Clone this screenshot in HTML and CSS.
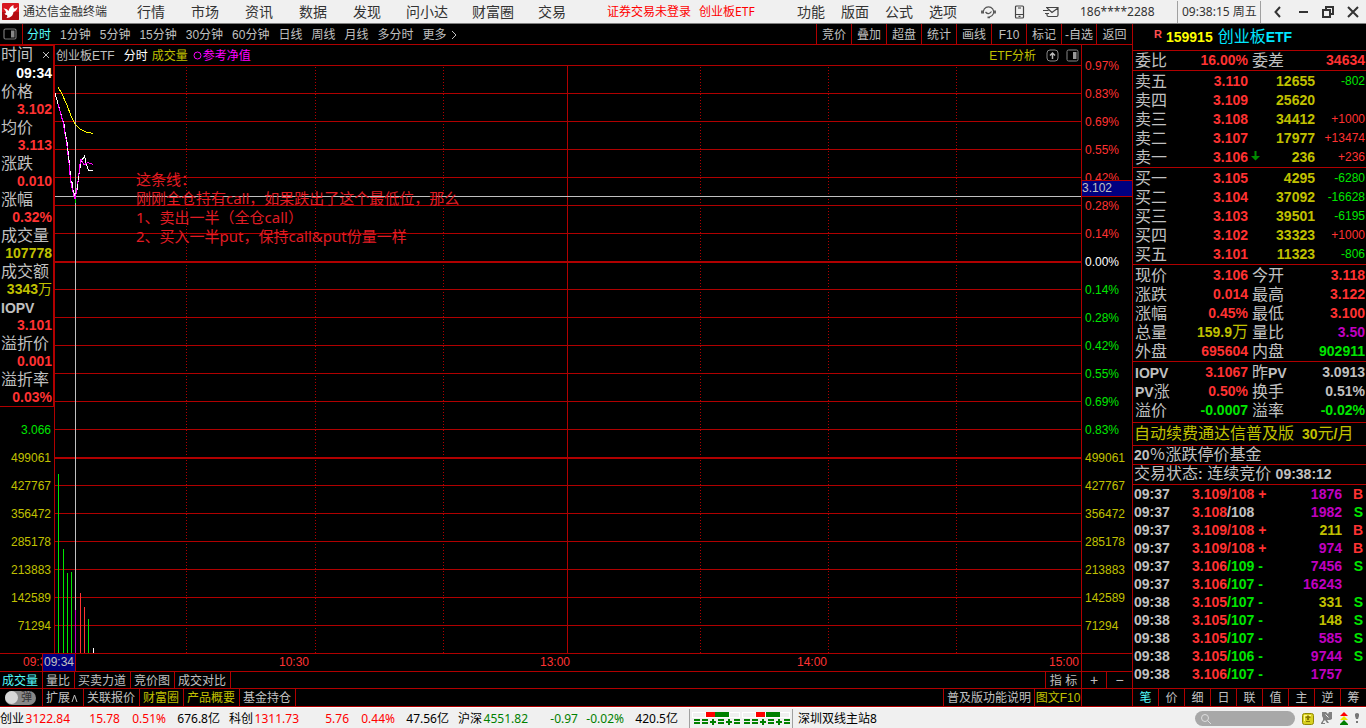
FILE: index.html
```html
<!DOCTYPE html>
<html lang="zh-CN">
<head>
<meta charset="utf-8">
<title>通达信金融终端</title>
<link rel="stylesheet" href="styles.css">
</head>
<body>
<header class="titlebar">
  <svg class="logo" viewBox="0 0 17 17"><rect width="17" height="17" rx="1" fill="#d8161e"/><path d="M0 9h17v7a1 1 0 0 1-1 1H1a1 1 0 0 1-1-1z" fill="#b40c12"/><path d="M1.500 5.500Q5 5 6.500 8q1-4.500 5-6-.5 2.500.5 3.500 1.500.5 3.500-1.500-.5 4-4 5-.5 4-4 5.500l-3 .5q1.500-1.500.5-3-2 0-2.500-1.500 1.500 0 1.500-1.500Q3.500 7 1.500 5.500z" fill="#fff"/></svg>
  <span class="brand">通达信金融终端</span>
  <nav class="menu menu-main"><button>行情</button><button>市场</button><button>资讯</button><button>数据</button><button>发现</button></nav>
  <nav class="menu menu-more"><button>问小达</button><button>财富圈</button><button>交易</button></nav>
  <div class="login"><a href="#">证券交易未登录</a><a href="#">创业板ETF</a></div>
  <div class="title-right">
    <nav class="menu menu-tools"><button>功能</button><button>版面</button><button>公式</button><button>选项</button></nav>
    <div class="title-icons">
      <button aria-label="客服"><svg width="15" height="14" viewBox="0 0 15 14" fill="none" stroke="#555" stroke-width="1.2"><path d="M2.500 8.500A5.200 5.200 0 1 1 12.500 8.500Q11.500 11 8.500 12M4.500 7q3 3.500 6-.5"/><path d="M1 5.500v3M14 5.500v3M6.500 12.300h2.500" stroke-width="1.800"/></svg></button>
      <button aria-label="手机"><svg width="11" height="14" viewBox="0 0 11 14" fill="none" stroke="#444" stroke-width="1.200"><rect x="1.500" y="1" width="8" height="12" rx="1"/><path d="M2 9.500h7M4.500 11.300h2M4 3h3"/></svg></button>
      <button aria-label="邮件"><svg width="16" height="12" viewBox="0 0 16 12" fill="none" stroke="#444" stroke-width="1.200"><path d="M3 1.500h12v7.500q0 1.500-1.500 1.500H5.500Q4 10.500 4 9V7.500M4 2l5 4.500L15 2M0 4.500h5.500M2 7.500h4"/></svg></button>
    </div>
    <span class="account">186****2288</span>
    <time class="clock">09:38:15 周五</time>
    <div class="window-buttons">
      <button aria-label="后退"><svg width="12" height="12" viewBox="0 0 12 12"><path d="M8 1L3.500 6 8 11" fill="none" stroke="#333" stroke-width="2"/></svg></button>
      <button aria-label="最小化"><svg width="12" height="12" viewBox="0 0 12 12"><path d="M2 6h9" stroke="#333" stroke-width="2"/></svg></button>
      <button aria-label="还原"><svg width="12" height="12" viewBox="0 0 12 12" fill="none" stroke="#333" stroke-width="2"><rect x="1" y="4" width="7" height="7"/><path d="M4 4V1h7v7H8"/></svg></button>
      <button aria-label="关闭"><svg width="12" height="12" viewBox="0 0 12 12"><path d="M1 1l10 10M11 1L1 11" stroke="#333" stroke-width="2"/></svg></button>
    </div>
  </div>
</header>

<main class="workspace">
  <section class="chart-side">
    <div class="toolbar">
      <button class="panel-toggle" aria-label="侧栏"><svg width="14" height="12" viewBox="0 0 14 12"><rect x="1" y="1" width="12" height="10" rx="1.500" fill="none" stroke="#777" stroke-width="1.200"/><rect x="8" y="2.500" width="3.500" height="7" fill="#888"/></svg></button>
      <nav class="periods"><button class="on">分时</button><button>1分钟</button><button>5分钟</button><button>15分钟</button><button>30分钟</button><button>60分钟</button><button>日线</button><button>周线</button><button>月线</button><button>多分时</button><button class="more">更多 <svg width="6" height="10" viewBox="0 0 6 10"><path d="M1 1l4 4-4 4" fill="none" stroke="#c0c0c0"/></svg></button></nav>
      <nav class="actions"><button>竞价</button><button>叠加</button><button>超盘</button><button>统计</button><button>画线</button><button>F10</button><button>标记</button><button>-自选</button><button>返回</button></nav>
    </div>

    <div class="chart">
      <div class="chart-left">
        <dl class="info">
          <dt class="info-head">时间<button aria-label="关闭信息栏"><svg width="8" height="8" viewBox="0 0 8 8"><path d="M1 1l6 6M7 1L1 7" stroke="#c0c0c0"/></svg></button></dt><dd class="white">09:34</dd>
          <dt>价格</dt><dd class="red">3.102</dd>
          <dt>均价</dt><dd class="red">3.113</dd>
          <dt>涨跌</dt><dd class="red">0.010</dd>
          <dt>涨幅</dt><dd class="red">0.32%</dd>
          <dt>成交量</dt><dd class="yellow">107778</dd>
          <dt>成交额</dt><dd class="yellow">3343<i>万</i></dd>
          <dt><b>IOPV</b></dt><dd class="red">3.101</dd>
          <dt>溢折价</dt><dd class="red">0.001</dd>
          <dt>溢折率</dt><dd class="red">0.03%</dd>
        </dl>
        <div class="axis axis-left yellow"><span class="green">3.066</span><span>499061</span><span>427767</span><span>356472</span><span>285178</span><span>213883</span><span>142589</span><span>71294</span></div>
      </div>

      <div class="chart-mid">
        <div class="chart-head">
          <span>创业板ETF</span><span class="white">分时</span><span class="yellow">成交量</span><span class="pink"><svg width="9" height="9" viewBox="0 0 9 9"><circle cx="4.500" cy="4.500" r="3.500" fill="none" stroke="#ff00ff"/></svg>参考净值</span>
          <div class="chart-head-right">
            <button class="yellow">ETF分析</button>
            <button aria-label="上移"><svg width="13" height="13" viewBox="0 0 13 13" fill="none" stroke="#888"><rect x="1" y="1" width="11" height="11" rx="3"/><path d="M6.500 10V4M4 6.500L6.500 4 9 6.500" stroke="#bbb" stroke-width="1.500"/></svg></button>
            <button aria-label="右侧栏"><svg width="13" height="13" viewBox="0 0 13 13"><rect x="1" y="1" width="11" height="11" rx="1.500" fill="none" stroke="#888"/><rect x="7" y="3" width="3.500" height="7" fill="#999"/></svg></button>
          </div>
        </div>
        <div class="plot">
          <svg class="plot-svg" viewBox="55 66 1026 587" preserveAspectRatio="none">
            <path class="grid" d="M55 93.500H1081M55 121.500H1081M55 149.500H1081M55 177.500H1081M55 205.500H1081M55 233.500H1081M55 289.500H1081M55 317.500H1081M55 345.500H1081M55 373.500H1081M55 401.500H1081M55 429.500H1081M55 485.500H1081M55 513.500H1081M55 541.500H1081M55 569.500H1081M55 597.500H1081M55 625.500H1081M567.500 66V653"/>
            <path class="grid heavy" d="M55 262H1081M55 458H1081"/>
            <path class="grid dotted" d="M186.500 67V653M315.500 67V653M443.500 67V653M700.500 67V653M828.500 67V653M956.500 67V653"/>
            <path class="bar up" d="M80.500 593V653M84.500 607V653"/>
            <path class="bar down" d="M58.500 474V653M63.500 549V653M67.500 573V653M71.500 572V653M88.500 619V653"/>
            <path class="bar last" d="M93.500 648V653"/>
            <path class="cross" d="M75.500 66V610M55 196.500H1081"/>
            <path class="bar cursor" d="M75.500 610V653"/>
            <polyline class="line average" points="58,87 62,94 67,105 71,116 75,124 80,129 86,132 93,133.500"/>
            <polyline class="line price" points="54.500,91 58,104 63,121 67,142 69,160 71,181 73,190 75,196 77,190 79,174 81,162 84.500,156 86,163 88.500,170.500 93,170.500"/>
            <polyline class="line value" points="58,104 63,122 66.500,142 69,163 70.500,181 73,192 75,199 76.500,192 78.500,178 80,164 81,159 84,165 88,162.500 93,164.500"/>
            <path class="line price dash" d="M64 124L67 142 69.500 165M72 182L74 193M77 188L79 174"/>
            <path class="bar down" d="M75.500 199V203"/>
          </svg>
          <p class="note">这条线：<br>刚刚全仓持有call，如果跌出了这个最低位，那么<br>1、卖出一半（全仓call）<br>2、买入一半put，保持call&amp;put份量一样</p>
        </div>
      </div>

      <div class="axis axis-right red">
        <span>0.97%</span><span>0.83%</span><span>0.69%</span><span>0.55%</span><span>0.42%</span><span>0.28%</span><span>0.14%</span><span class="white">0.00%</span>
        <span class="green">0.14%</span><span class="green">0.28%</span><span class="green">0.42%</span><span class="green">0.55%</span><span class="green">0.69%</span><span class="green">0.83%</span>
        <span class="yellow">499061</span><span class="yellow">427767</span><span class="yellow">356472</span><span class="yellow">285178</span><span class="yellow">213883</span><span class="yellow">142589</span><span class="yellow">71294</span>
        <strong class="price-tag">3.102</strong>
      </div>
    </div>

    <div class="times red">
      <span class="time-start">09:30</span>
      <strong class="time-tag">09:34</strong>
      <div class="time-scale"><span></span><span>10:30</span><span>13:00</span><span class="time-end"><span>14:00</span><span>15:00</span></span></div>
      <span class="time-corner"></span>
    </div>

    <div class="tabs">
      <button class="first on">成交量</button><button>量比</button><button>买卖力道</button><button>竞价图</button><button>成交对比</button>
      <div class="tabs-right"><button class="indicator">指 标</button><button class="zoom">+</button><button class="zoom">−</button></div>
    </div>
    <div class="tabs">
      <label class="first switch"><input type="checkbox"><span>弹</span></label><button class="expand">扩展<svg width="7" height="8" viewBox="0 0 7 8"><path d="M1 8l2.500-7L6 8" fill="none" stroke="#c0c0c0"/></svg></button><button>关联报价</button><button class="yellow">财富圈</button><button class="yellow">产品概要</button><button>基金持仓</button>
      <div class="tabs-right"><button class="manual">普及版功能说明</button><button class="yellow f10">图文F10</button><span class="tabs-corner"></span></div>
    </div>
  </section>

  <aside class="quote">
    <h1 class="symbol"><sup>R</sup><b>159915</b><span>创业板<b>ETF</b></span></h1>
    <table class="pairs rule"><tr><th>委比</th><td class="red">16.00%</td><th>委差</th><td class="red">34634</td></tr></table>
    <table class="book rule">
      <tr><th>卖五</th><td class="red">3.110</td><td class="yellow">12655</td><td class="delta green">-802</td></tr>
      <tr><th>卖四</th><td class="red">3.109</td><td class="yellow">25620</td><td class="delta"></td></tr>
      <tr><th>卖三</th><td class="red">3.108</td><td class="yellow">34412</td><td class="delta red">+1000</td></tr>
      <tr><th>卖二</th><td class="red">3.107</td><td class="yellow">17977</td><td class="delta red">+13474</td></tr>
      <tr><th>卖一</th><td class="red">3.106</td><td class="yellow"><svg class="arrow" width="9" height="10" viewBox="0 0 9 10"><path d="M3.500 0h2v5H9L4.500 9.500 0 5h3.500z" fill="#008c00"/></svg>236</td><td class="delta red">+236</td></tr>
    </table>
    <table class="book rule">
      <tr><th>买一</th><td class="red">3.105</td><td class="yellow">4295</td><td class="delta green">-6280</td></tr>
      <tr><th>买二</th><td class="red">3.104</td><td class="yellow">37092</td><td class="delta green">-16628</td></tr>
      <tr><th>买三</th><td class="red">3.103</td><td class="yellow">39501</td><td class="delta green">-6195</td></tr>
      <tr><th>买四</th><td class="red">3.102</td><td class="yellow">33323</td><td class="delta red">+1000</td></tr>
      <tr><th>买五</th><td class="red">3.101</td><td class="yellow">11323</td><td class="delta green">-806</td></tr>
    </table>
    <table class="pairs rule pad">
      <tr><th>现价</th><td class="red">3.106</td><th>今开</th><td class="red">3.118</td></tr>
      <tr><th>涨跌</th><td class="red">0.014</td><th>最高</th><td class="red">3.122</td></tr>
      <tr><th>涨幅</th><td class="red">0.45%</td><th>最低</th><td class="red">3.100</td></tr>
      <tr><th>总量</th><td class="yellow">159.9<i>万</i></td><th>量比</th><td class="purple">3.50</td></tr>
      <tr><th>外盘</th><td class="red">695604</td><th>内盘</th><td class="green">902911</td></tr>
    </table>
    <table class="pairs rule pad fund">
      <tr><th><b>IOPV</b></th><td class="red">3.1067</td><th>昨<b>PV</b></th><td>3.0913</td></tr>
      <tr><th><b>PV</b>涨</th><td class="red">0.50%</td><th>换手</th><td>0.51%</td></tr>
      <tr><th>溢价</th><td class="green">-0.0007</td><th>溢率</th><td class="green">-0.02%</td></tr>
    </table>
    <p class="message promo yellow"><span>自动续费通达信普及版</span><span><b>30</b>元<b>/</b>月</span></p>
    <p class="message"><b>20</b>％涨跌停价基金</p>
    <p class="message state">交易状态<b>:</b> 连续竞价 <b>09:38:12</b></p>
    <table class="ticks">
      <tr><th>09:37</th><td class="red">3.109/108 +</td><td class="purple">1876</td><td class="red">B</td></tr>
      <tr><th>09:37</th><td><span class="red">3.108</span>/108</td><td class="purple">1982</td><td class="green">S</td></tr>
      <tr><th>09:37</th><td class="red">3.109/108 +</td><td class="yellow">211</td><td class="red">B</td></tr>
      <tr><th>09:37</th><td class="red">3.109/108 +</td><td class="purple">974</td><td class="red">B</td></tr>
      <tr><th>09:37</th><td class="green"><span class="red">3.106</span>/109 -</td><td class="purple">7456</td><td class="green">S</td></tr>
      <tr><th>09:37</th><td class="green"><span class="red">3.106</span>/107 -</td><td class="purple">16243</td><td></td></tr>
      <tr><th>09:38</th><td class="green"><span class="red">3.105</span>/107 -</td><td class="yellow">331</td><td class="green">S</td></tr>
      <tr><th>09:38</th><td class="green"><span class="red">3.105</span>/107 -</td><td class="yellow">148</td><td class="green">S</td></tr>
      <tr><th>09:38</th><td class="green"><span class="red">3.105</span>/107 -</td><td class="purple">585</td><td class="green">S</td></tr>
      <tr><th>09:38</th><td class="green"><span class="red">3.105</span>/106 -</td><td class="purple">9744</td><td class="green">S</td></tr>
      <tr><th>09:38</th><td class="green"><span class="red">3.106</span>/107 -</td><td class="purple">1757</td><td></td></tr>
    </table>
    <nav class="quote-tabs"><button class="on">笔</button><button>价</button><button>细</button><button>日</button><button>联</button><button>值</button><button>主</button><button>逆</button><button>筹</button></nav>
  </aside>
</main>

<footer class="status">
  <div class="index up"><b>创业</b><span>3122.84</span><span>15.78</span><span>0.51%</span><b>676.8亿</b></div>
  <div class="index up"><b>科创</b><span>1311.73</span><span>5.76</span><span>0.44%</span><b>47.56亿</b></div>
  <div class="index down"><b>沪深</b><span>4551.82</span><span>-0.97</span><span>-0.02%</span><b>420.5亿</b></div>
  <div class="gauge">
    <svg width="98" height="14" viewBox="0 0 98 14"><path d="M0 0h48v6H0zM50 0h48v6H50z" fill="#fff"/><path d="M1 1h12v4H1zM38 1h9v4h-9zM51 1h12v4H51zM88 1h9v4h-9z" fill="#f0f0f0"/><path d="M14 0h9v5h-9zM64 0h9v5h-9z" fill="#f00"/><path d="M23 0h14v5H23zM74 0h14v5H74z" fill="#008000"/><path d="M2 8h6M2 11h6M10 8h6M10 11h6M18 10h6M26 8h6M26 11h6M34 10h6M42 8h6M42 11h6M52 8h6M52 11h6M60 8h6M60 11h6M68 10h6M76 8h6M76 11h6M84 10h6M92 8h6M92 11h6" stroke="#008000" stroke-width="2"/><path d="M20 7h2v6h-2zM36 7h2v6h-2zM70 7h2v6h-2zM86 7h2v6h-2z" fill="#008000"/></svg>
  </div>
  <span class="server">深圳双线主站8</span>
  <div class="status-right">
    <label class="search"><svg width="10" height="10" viewBox="0 0 10 10" fill="none" stroke="#ddd"><circle cx="4" cy="4" r="3.500"/><path d="M6.500 6.500L10 10"/></svg><input type="text" aria-label="搜索"></label>
    <svg width="12" height="12" viewBox="0 0 12 12"><rect x=".5" y=".5" width="11" height="11" rx="2" fill="#d8d020" stroke="#908800"/><path d="M2 2h7v1H3v5H2z" fill="#fff88a"/><path d="M6 2L3 5h2v2h2V5h2zM4 8h4v1H4z" fill="#887800"/></svg>
    <svg width="12" height="13" viewBox="0 0 12 13"><path d="M1 0h4l2 2 1-2h3v7L9 8H6l2 3H6L4 8 2 10v1h2v1H0v-1l2-3V6L1 4z" fill="#808080"/><path d="M4.500 2.500l3 3" stroke="#eee"/></svg>
    <svg width="8" height="13" viewBox="0 0 8 13"><path d="M4 0l4 4H0z" fill="#f00"/><path d="M4 4l4 4H0z" fill="#e8e800"/><path d="M4 8l4 4v1H0v-1z" fill="#008000"/></svg>
    <svg width="4" height="11" viewBox="0 0 4 11"><path d="M0 1q2-2 4 0v2L3 6H1L0 3zM1 8h2v2H1z" fill="#777"/></svg>
  </div>
</footer>
</body>
</html>
```
FILE: styles.css
```css
:root {
  --line: #b00000;
  --text: #c0c0c0;
}
* { box-sizing: border-box; margin: 0; padding: 0; }
body {
  display: flex;
  flex-direction: column;
  min-height: 100vh;
  overflow-x: hidden;
  background: #000;
  color: var(--text);
  font: 12px/16px "Liberation Sans", "Noto Sans CJK SC", sans-serif;
  white-space: nowrap;
}
button { border: 0; background: none; color: inherit; font: inherit; cursor: pointer; }
svg { display: block; flex: none; }
b, i { line-height: 1; }
i { font-style: normal; font-weight: 400; }
.red { color: #ff3232; }
.green { color: #00e600; }
.yellow { color: #c0c000; }
.purple { color: #c000c0; }
.pink { color: #ff00ff; }
.white { color: #fff; }
.on { color: #54fcfc; }

/* title bar */
.titlebar {
  display: flex;
  align-items: center;
  height: 24px;
  padding-left: 2px;
  border-bottom: 1px solid #808080;
  background: #f0f0f0;
  color: #333;
  font-family: "Noto Sans", "Noto Sans CJK SC", sans-serif;
}
.logo { width: 17px; height: 17px; }
.brand { margin-left: 4px; }
.menu { display: flex; font-size: 14px; }
.menu-main { gap: 26px; margin-left: 30px; }
.menu-more { gap: 24px; margin-left: 25px; }
.menu-tools { gap: 16px; }
.login { display: flex; gap: 8px; margin-left: 41px; }
.login a { color: #f00; text-decoration: none; }
.title-right { display: flex; align-items: center; margin-left: auto; height: 100%; }
.title-icons { display: flex; align-items: center; gap: 18px; margin-left: 24px; }
.account { width: 97px; margin-left: 21px; }
.clock { width: 84px; padding: 3px 0 3px 4px; border: solid #a0a0a0; border-width: 0 1px; }
.window-buttons { display: flex; gap: 13px; padding: 0 7px 0 11px; }

/* frame */
.workspace { display: flex; flex: 1; }
.chart-side { display: flex; flex: 1; flex-direction: column; min-width: 0; }

.toolbar { display: flex; height: 21px; border-bottom: 1px solid var(--line); line-height: 20px; }
.panel-toggle { width: 23px; padding-left: 3px; border-right: 1px solid var(--line); }
.periods { display: flex; gap: 9px; padding: 1px 0 0 4px; }
.more { display: flex; align-items: center; gap: 4px; }
.actions { display: flex; margin-left: auto; }
.actions button { width: 35px; padding-top: 1px; border-left: 1px solid var(--line); }
.actions button:last-child { width: 36px; }

/* chart */
.chart { display: flex; flex: 1; }
.chart-left { display: flex; flex-direction: column; width: 54px; }
.info {
  border: solid var(--line);
  border-width: 1px 1px 1px 0;
  font-size: 16px;
  line-height: 20px;
}
.info dt { height: 18px; padding-left: 1px; }
.info dd { height: 18px; padding-right: 1px; font-size: 14px; font-weight: 700; line-height: 18px; text-align: right; }
.info b, .quote b { font-size: 14px; }
.info-head { display: flex; align-items: center; justify-content: space-between; padding-right: 3px; }
.info i { font-size: 14px; }
.quote td i { font-size: 16px; }
.axis { display: flex; flex-direction: column; }
.axis > span { display: flex; flex: 1; align-items: center; }
.axis-left { flex: 1; padding: 9px 3px 13px 0; }
.axis-left > span { justify-content: flex-end; }
.axis-right { position: relative; width: 51px; padding: 7px 0 13px 3px; border-left: 1px solid var(--line); }
.price-tag {
  position: absolute;
  top: 135px;
  left: 0;
  width: 100%;
  border: solid var(--line);
  border-width: 1px 0;
  background: #000080;
  color: var(--text);
  font-weight: 400;
  line-height: 15px;
}
.chart-mid { display: flex; flex: 1; flex-direction: column; min-width: 0; border-left: 1px solid var(--line); }
.chart-head { display: flex; align-items: center; height: 21px; padding: 1px 2px 0 1px; border-bottom: 1px solid var(--line); }
.chart-head .white { margin: 0 4px 0 9px; }
.pink { display: flex; align-items: center; gap: 1px; margin-left: 5px; }
.chart-head-right { display: flex; align-items: center; gap: 7px; margin-left: auto; }
.chart-head-right .yellow { margin-right: 3px; }
.plot { position: relative; flex: 1; }
.plot-svg { position: absolute; width: 100%; height: 100%; shape-rendering: crispEdges; }
.plot-svg * { fill: none; stroke-width: 1px; vector-effect: non-scaling-stroke; }
.plot-svg .grid { stroke: var(--line); }
.plot-svg .heavy { stroke-width: 2px; }
.plot-svg .dotted { stroke-dasharray: 1 2; }
.plot-svg .up { stroke: #ff3232; }
.plot-svg .down { stroke: #00e600; }
.plot-svg .last { stroke: #fff; }
.plot-svg .cross { stroke: var(--text); }
.plot-svg .cursor { stroke: #c000c0; }
.plot-svg .average { stroke: #ff0; }
.plot-svg .price { stroke: #fff; }
.plot-svg .value { stroke: #f0f; }
.plot-svg .dash { stroke-dasharray: 4 4; }
.note {
  position: absolute;
  top: 104px;
  left: 81px;
  color: #e01c24;
  font: 15px/19px "Noto Sans", "Noto Sans CJK SC", sans-serif;
}

/* time scale */
.times { display: flex; height: 18px; border-top: 1px solid var(--line); }
.time-start { width: 42px; padding-left: 23px; overflow: hidden; }
.time-scale { display: grid; flex: 1; grid-template-columns: 203fr 261fr 257fr 284fr; }
.time-end { display: flex; justify-content: space-between; padding-right: 2px; }
.time-corner { width: 51px; border-left: 1px solid var(--line); }
.time-tag {
  width: 34px;
  border: solid var(--line);
  border-width: 0 1px;
  background: #000080;
  color: var(--text);
  font-weight: 400;
  text-align: center;
}

/* lower tabs */
.tabs { display: flex; height: 17px; border-top: 1px solid var(--line); line-height: 16px; }
.tabs:last-child { height: 19px; border-bottom: 1px solid var(--line); line-height: 17px; }
.tabs button { padding: 1px 4px 0 3px; border-right: 1px solid var(--line); }
.tabs .first { width: 43px; padding: 1px 0 0 2px; border-right: 1px solid var(--line); text-align: left; }
.tabs .switch { padding-top: 0; }
.tabs .expand { display: flex; align-items: center; width: 41px; gap: 1px; }
.tabs-right { display: flex; margin-left: auto; border-left: 1px solid var(--line); }
.tabs .indicator { width: 36px; padding: 1px 0 0; }
.tabs .zoom { width: 25px; padding: 0; font-size: 14px; }
.tabs .zoom:last-child { border: 0; }
.tabs .manual { width: 91px; padding: 1px 0 0; }
.tabs .f10 { width: 47px; padding: 1px 0 0; }
.tabs-corner { width: 50px; }
.switch { display: flex; align-items: center; }
.switch input { position: absolute; opacity: 0; }
.switch span {
  display: flex;
  align-items: center;
  width: 31px;
  height: 14px;
  margin-left: 3px;
  border-radius: 7px;
  background: #888;
  color: #333;
  font-size: 11px;
}
.switch span::before { width: 13px; height: 13px; margin-right: 3px; border-radius: 50%; background: #d8d8d8; content: ""; }

/* quote panel */
.quote { display: flex; flex-direction: column; width: 234px; border: solid var(--line); border-width: 0 0 1px 1px; }
.symbol {
  display: flex;
  align-items: center;
  height: 27px;
  padding-left: 21px;
  border-bottom: 1px solid var(--line);
  color: #00e6ff;
  font-size: 16px;
  font-weight: 400;
}
.symbol sup { align-self: flex-start; margin: 2px 4px 0 0; color: #ff5050; font-size: 11px; font-weight: 700; }
.symbol > b { margin-right: 5px; color: #ff0; }
.quote table { width: 100%; table-layout: fixed; border-spacing: 0; font-size: 14px; font-weight: 700; line-height: 19px; }
.quote th { width: 47px; height: 19px; padding-left: 2px; font-size: 16px; font-weight: 400; text-align: left; }
.quote td { text-align: right; }
.quote .rule { border-bottom: 1px solid var(--line); }
.pairs td { width: 68px; }
.pairs th:nth-child(3) { width: 52px; padding-left: 4px; }
.pairs td:last-child { width: auto; padding-right: 1px; }
.book, .pad { padding-top: 1px; }
.fund { padding-bottom: 2px; }
.book td { width: 67px; }
.book td:nth-child(2) { width: 68px; }
.quote .book .delta { width: auto; padding-right: 1px; font-size: 12px; font-weight: 400; }
.arrow { float: left; margin: 3px 0 0 3px; }
.message { height: 19px; padding-left: 1px; border-bottom: 1px solid var(--line); font-size: 16px; line-height: 18px; }
.state { height: 20px; }
.promo { display: flex; gap: 8px; height: 23px; line-height: 21px; }
.quote .ticks { line-height: 18px; }
.ticks th { width: 59px; height: 18px; padding-left: 1px; font-size: 14px; font-weight: 700; }
.ticks td:nth-child(2) { text-align: left; }
.ticks td:nth-child(3) { width: 65px; }
.quote .ticks td:nth-child(4) { width: 24px; padding-right: 3px; }
.quote-tabs { display: flex; margin-top: auto; border-top: 1px solid var(--line); line-height: 16px; }
.quote-tabs button { flex: 1; padding-top: 1px; border-right: 1px solid var(--line); }
.quote-tabs button:last-child { border-right: 0; }

/* status bar */
.status {
  display: flex;
  height: 21px;
  padding-top: 2px;
  border-top: 1px solid #fff;
  background: #f0f0f0;
  color: #000;
  font: 12px/18px "Noto Sans", "Noto Sans CJK SC", sans-serif;
}
.index { display: grid; grid-template-columns: 25px 45px 50px 46px 54px; margin-right: 9px; text-align: right; }
.index b { color: #000; font-weight: 400; line-height: inherit; }
.index b:first-child { text-align: left; }
.index.up { color: #f00; }
.index.down { color: #008000; }
.gauge { display: flex; align-items: center; margin: -1px 0 0 2px; padding: 0 2px; border: solid #a0a0a0; border-width: 0 1px; }
.server { margin-left: 5px; }
.status-right { display: flex; align-items: center; gap: 7px; margin: -1px 7px 0 auto; }
.search { display: flex; align-items: center; width: 100px; height: 15px; padding-left: 6px; border-radius: 8px; background: #a8a8a8; }
.search input { flex: 1; min-width: 0; border: 0; outline: 0; background: none; font: inherit; }
```
